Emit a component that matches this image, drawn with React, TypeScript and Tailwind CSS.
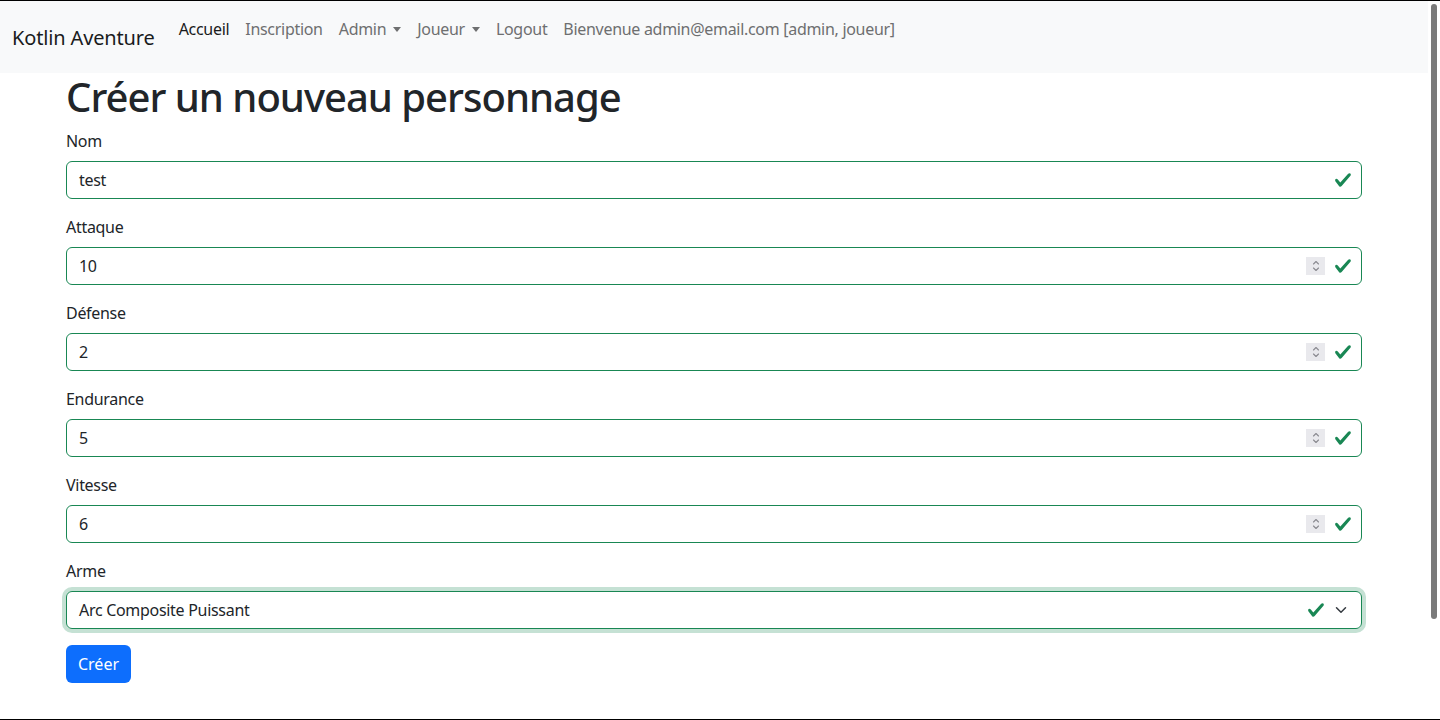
import React from "react";

const FONT = { fontFamily: '"Noto Sans", "Open Sans", sans-serif' };

function Check() {
  return (
    <svg viewBox="0 0 8 8" className="w-[18px] h-[18px] flex-shrink-0">
      <path
        fill="#198754"
        d="M2.3 6.73.6 4.53c-.4-1.04.46-1.4 1.1-.8l1.1 1.4 3.4-3.8c.6-.63 1.6-.27 1.2.7l-4 4.6c-.43.5-.8.4-1.1.1z"
      />
    </svg>
  );
}

function Spinner() {
  return (
    <div className="w-[19px] h-[18px] bg-[#e9e9ed] flex items-center justify-center">
      <svg viewBox="0 0 10 14" className="w-[10px] h-[14px]">
        <path d="M2.5 5 5 2.5 7.5 5" fill="none" stroke="#8a8a90" strokeWidth="1.1" strokeLinecap="round" strokeLinejoin="round" />
        <path d="M2.5 9 5 11.5 7.5 9" fill="none" stroke="#8a8a90" strokeWidth="1.1" strokeLinecap="round" strokeLinejoin="round" />
      </svg>
    </div>
  );
}

function Field({ label, value, number }: { label: string; value: string; number?: boolean }) {
  return (
    <div className="mb-4">
      <div className="mb-2 leading-6 text-[#212529]">{label}</div>
      <div className="h-[38px] border border-[#198754] rounded-md flex items-center pl-3 pr-[9px] text-[#212529]">
        <span className="flex-1 leading-6">{value}</span>
        {number && <Spinner />}
        <div className={number ? "ml-[9px]" : ""}>
          <Check />
        </div>
      </div>
    </div>
  );
}

function Caret() {
  return (
    <span className="inline-block ml-[7px] align-[3px] w-0 h-0 border-l-[4.5px] border-r-[4.5px] border-t-[5px] border-l-transparent border-r-transparent border-t-[#6e6f70]" />
  );
}

export default function App() {
  const fields = [
    { label: "Nom", value: "test" },
    { label: "Attaque", value: "10", number: true },
    { label: "Défense", value: "2", number: true },
    { label: "Endurance", value: "5", number: true },
    { label: "Vitesse", value: "6", number: true },
  ];

  return (
    <div className="h-[720px] border-y border-black bg-white overflow-hidden text-base tracking-[-0.3px]" style={FONT}>
      <div className="flex h-full">
        <div className="flex-1 min-w-0">
          <nav className="h-[72px] bg-[#f8f9fa] flex items-start px-3">
            <a className="mt-[22px] mr-4 text-xl leading-[30px] text-[#1a1b1c] tracking-[-0.15px]">Kotlin Aventure</a>
            <ul className="flex mt-4 leading-6">
              <li className="px-2 text-[#1a1b1c]">Accueil</li>
              <li className="px-2 text-[#6e6f70]">Inscription</li>
              <li className="px-2 text-[#6e6f70]">
                Admin
                <Caret />
              </li>
              <li className="px-2 text-[#6e6f70]">
                Joueur
                <Caret />
              </li>
              <li className="px-2 text-[#6e6f70]">Logout</li>
              <li className="px-2 text-[#6e6f70]">Bienvenue admin@email.com [admin, joueur]</li>
            </ul>
          </nav>

          <main className="w-[1320px] mx-auto px-3">
            <h1 className="text-[40px] leading-[48px] font-medium text-[#212529] mb-2 tracking-[-1px]">Créer un nouveau personnage</h1>
            {fields.map((f) => (
              <Field key={f.label} label={f.label} value={f.value} number={f.number} />
            ))}
            <div className="mb-4">
              <div className="mb-2 leading-6 text-[#212529]">Arme</div>
              <div className="h-[38px] border border-[#198754] rounded-md shadow-[0_0_0_4px_rgba(25,135,84,0.25)] flex items-center pl-3 pr-3 text-[#212529]">
                <span className="flex-1 leading-6">Arc Composite Puissant</span>
                <Check />
                <svg viewBox="0 0 16 16" className="ml-2 w-4 h-3">
                  <path d="m2 5 6 6 6-6" fill="none" stroke="#343a40" strokeWidth="2" strokeLinecap="round" strokeLinejoin="round" />
                </svg>
              </div>
            </div>
            <button className="h-[38px] w-[65px] rounded-md bg-[#0d6efd] text-white leading-6 tracking-normal">Créer</button>
          </main>
        </div>

        <div className="w-3 flex-shrink-0 bg-white pl-[3px] pr-[3px] pt-[3px]">
          <div className="w-[6px] h-[615px] rounded-sm bg-[#7a7a7a]" />
        </div>
      </div>
    </div>
  );
}
